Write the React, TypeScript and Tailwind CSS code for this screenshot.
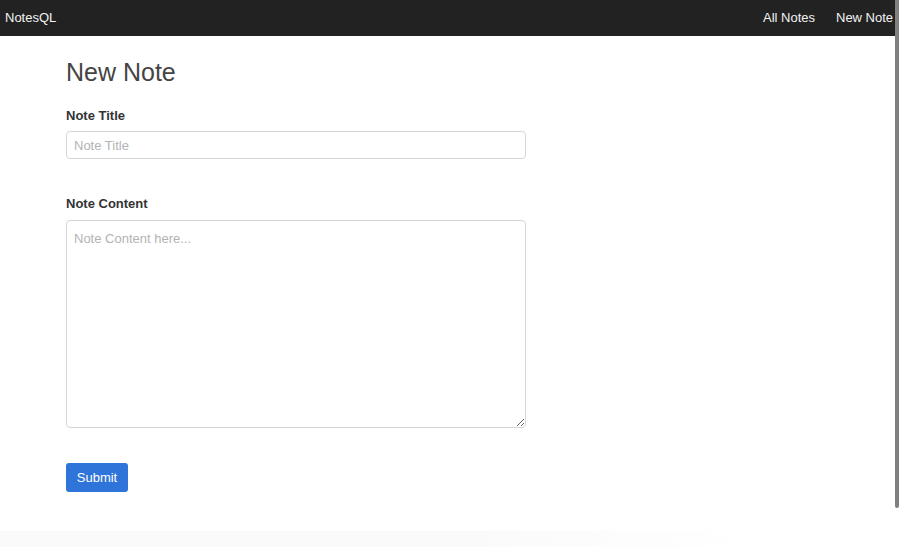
import React from "react";

export default function App() {
  return (
    <div className="relative h-[547px] w-[899px] overflow-hidden bg-white" style={{ fontFamily: '"Liberation Sans", Arial, sans-serif' }}>
      <nav className="flex h-[36px] items-center justify-between bg-[#222222] pl-[5px] text-[13px] text-[#f2f2f2]">
        <span>NotesQL</span>
        <div className="flex gap-[21px]">
          <span>All Notes</span>
          <span className="w-[63px] overflow-hidden whitespace-nowrap">New Note</span>
        </div>
      </nav>
      <main className="pl-[66px] pt-[22px]">
        <h1 className="text-[25px] leading-[29px] font-light text-[#444]">New Note</h1>
        <form className="mt-[21px] w-[460px]">
          <label className="block text-[13px] font-bold leading-[16px] text-[#333]">Note Title</label>
          <input
            className="mt-[7px] block h-[28px] w-[460px] rounded-[4px] border border-[#d6d6d6] px-[7px] text-[13px] outline-none placeholder:text-[#b3b3b3]"
            placeholder="Note Title"
          />
          <label className="mt-[37px] block text-[13px] font-bold leading-[16px] text-[#333]">Note Content</label>
          <textarea
            className="mt-[8px] block h-[208px] w-[460px] rounded-[4px] border border-[#d6d6d6] px-[7px] py-[10px] text-[13px] leading-[16px] outline-none placeholder:text-[#b3b3b3]"
            placeholder="Note Content here..."
          />
          <button
            type="button"
            className="mt-[35px] block h-[29px] w-[62px] rounded-[3px] bg-[#2f74d8] text-[13px] text-white"
          >
            Submit
          </button>
        </form>
      </main>
      <div className="absolute bottom-0 left-0 h-[16px] w-[760px] bg-gradient-to-r from-[#fafafa] from-60% to-white" />
      <div className="absolute right-0 top-0 h-[508px] w-[4px] rounded-b-[2px] bg-[#7f7f7f]" />
    </div>
  );
}
